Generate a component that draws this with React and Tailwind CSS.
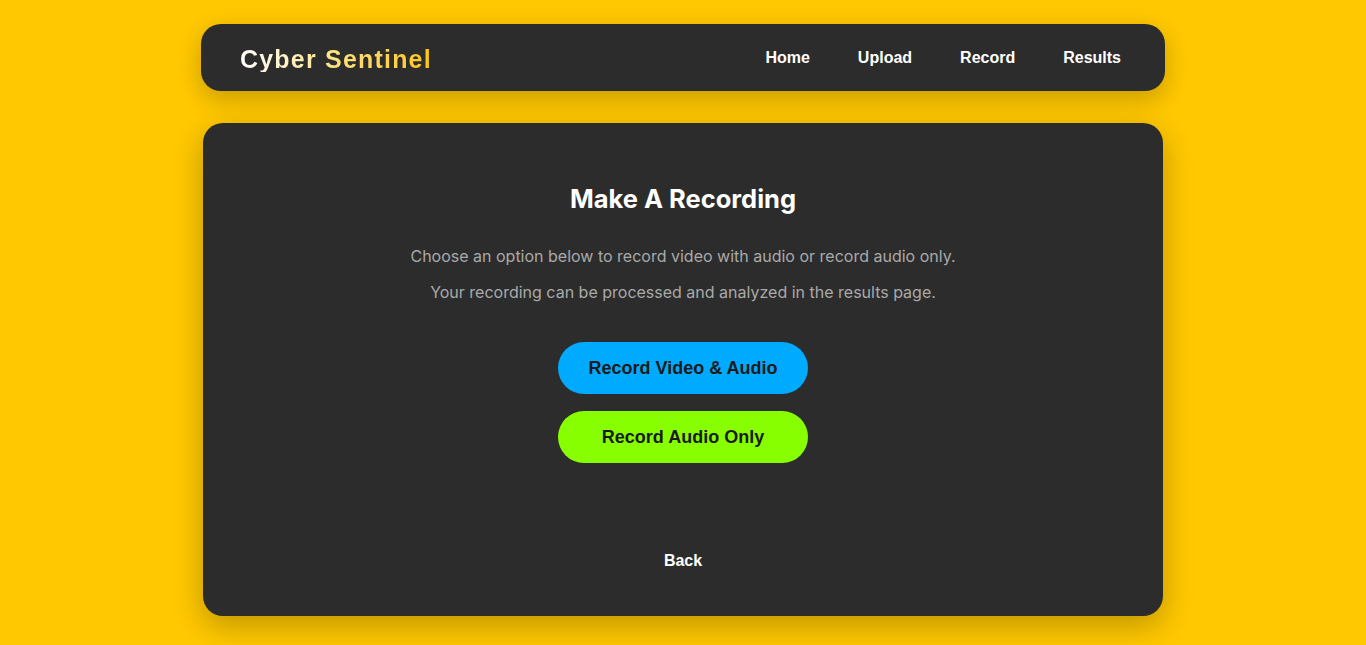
import React from "react";

const arial = { fontFamily: '"Liberation Sans", Arial, sans-serif' };

export default function App() {
  return (
    <div className="min-h-screen bg-[#ffc800] flex flex-col items-center pt-6 pb-8 font-['Inter',sans-serif]">
      <nav
        className="w-[964px] h-[67px] bg-[#2c2c2c] rounded-[20px] shadow-[0_8px_24px_rgba(0,0,0,0.22)] flex items-center justify-between pl-[39px] pr-[44px]"
        style={arial}
      >
        <span className="text-[25px] font-bold tracking-[1.2px] bg-gradient-to-r from-white via-[#ffe27a] to-[#ffc400] bg-clip-text text-transparent leading-none pt-[3px]">
          Cyber Sentinel
        </span>
        <div className="flex items-center gap-12 text-white font-bold text-base">
          <a href="#">Home</a>
          <a href="#">Upload</a>
          <a href="#">Record</a>
          <a href="#">Results</a>
        </div>
      </nav>

      <main className="mt-8 w-[960px] h-[493px] bg-[#2c2c2c] rounded-[20px] shadow-[0_10px_30px_rgba(0,0,0,0.25)] flex flex-col items-center pt-[60px]">
        <h1 className="text-[25.5px] leading-8 font-bold text-white">Make A Recording</h1>
        <p className="mt-[29px] text-base leading-6 text-[#a9a9a9]">
          Choose an option below to record video with audio or record audio only.
        </p>
        <p className="mt-3 text-base leading-6 text-[#a9a9a9]">
          Your recording can be processed and analyzed in the results page.
        </p>
        <button
          className="mt-[38px] w-[250px] h-[52px] rounded-full bg-[#00aaff] text-[#1a1a1a] text-lg font-bold"
          style={arial}
        >
          Record Video &amp; Audio
        </button>
        <button
          className="mt-[17px] w-[250px] h-[52px] rounded-full bg-[#88ff00] text-[#1a1a1a] text-lg font-bold"
          style={arial}
        >
          Record Audio Only
        </button>
        <a href="#" className="mt-[86px] text-base leading-6 font-bold text-white" style={arial}>
          Back
        </a>
      </main>
    </div>
  );
}
